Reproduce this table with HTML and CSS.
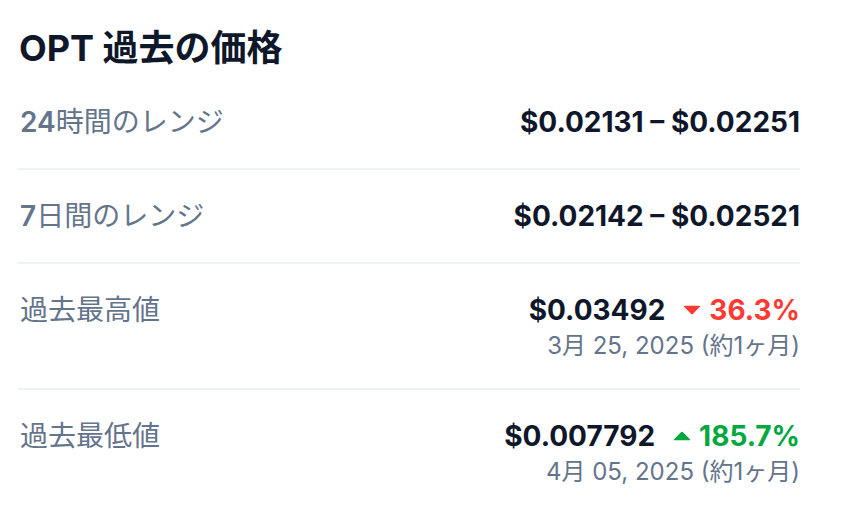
FILE: index.html
```html
<!DOCTYPE html>
<html lang="ja">
<head>
<meta charset="utf-8">
<link rel="stylesheet" href="styles.css">
</head>
<body>
<div class="panel">
  <h2 class="title">OPT 過去の価格</h2>
  <div class="row">
    <div class="label"><span class="num">24</span>時間のレンジ</div>
    <div class="value">
      <div class="main">$0.02131 – $0.02251</div>
    </div>
  </div>
  <div class="row">
    <div class="label"><span class="num">7</span>日間のレンジ</div>
    <div class="value">
      <div class="main">$0.02142 – $0.02521</div>
    </div>
  </div>
  <div class="row">
    <div class="label">過去最高値</div>
    <div class="value">
      <div class="main">
        <span>$0.03492</span>
        <span class="change down">
          <svg class="caret" viewBox="0 0 18 10" width="18" height="10"><path d="M1.5 0.8 H16.5 Q17.7 0.8 16.9 1.8 L9.8 9 Q9 9.7 8.2 9 L1.1 1.8 Q0.3 0.8 1.5 0.8 Z"/></svg>
          36.3%
        </span>
      </div>
      <div class="date">3月 25, 2025 (約1ヶ月)</div>
    </div>
  </div>
  <div class="row last">
    <div class="label">過去最低値</div>
    <div class="value">
      <div class="main">
        <span>$0.007792</span>
        <span class="change up">
          <svg class="caret" viewBox="0 0 18 10" width="18" height="10"><path d="M1.5 9.2 H16.5 Q17.7 9.2 16.9 8.2 L9.8 1 Q9 0.3 8.2 1 L1.1 8.2 Q0.3 9.2 1.5 9.2 Z"/></svg>
          185.7%
        </span>
      </div>
      <div class="date">4月 05, 2025 (約1ヶ月)</div>
    </div>
  </div>
</div>
</body>
</html>
```
FILE: styles.css
```css
* { box-sizing: border-box; }
html, body {
  margin: 0;
  padding: 0;
  background: #ffffff;
}
body {
  font-family: "Inter", "Noto Sans CJK JP", sans-serif;
  color: #0d1421;
}
.panel {
  width: 782px;
  margin-left: 18px;
  padding-top: 20px;
}
.title {
  margin: 0;
  font-size: 36px;
  line-height: 56px;
  font-weight: 700;
  color: #0f172a;
  padding-left: 1px;
}
.row {
  display: flex;
  justify-content: space-between;
  align-items: flex-start;
  padding: 26px 0;
  border-bottom: 2px solid #eff2f5;
}
.row.last { border-bottom: none; }
.label {
  font-size: 28px;
  line-height: 40px;
  font-weight: 400;
  color: #64748b;
  padding-left: 2px;
}
.label .num { font-weight: 600; }
.value {
  display: flex;
  flex-direction: column;
  align-items: flex-end;
}
.main {
  display: flex;
  align-items: center;
  gap: 18px;
  font-size: 28px;
  line-height: 40px;
  font-weight: 700;
  color: #0f172a;
}
.change {
  display: flex;
  align-items: center;
  gap: 8px;
}
.change.down { color: #ff3a33; }
.change.up { color: #00a83e; }
.caret { fill: currentColor; display: block; }
.date {
  font-size: 24px;
  line-height: 32px;
  font-weight: 400;
  color: #64748b;
}
```
